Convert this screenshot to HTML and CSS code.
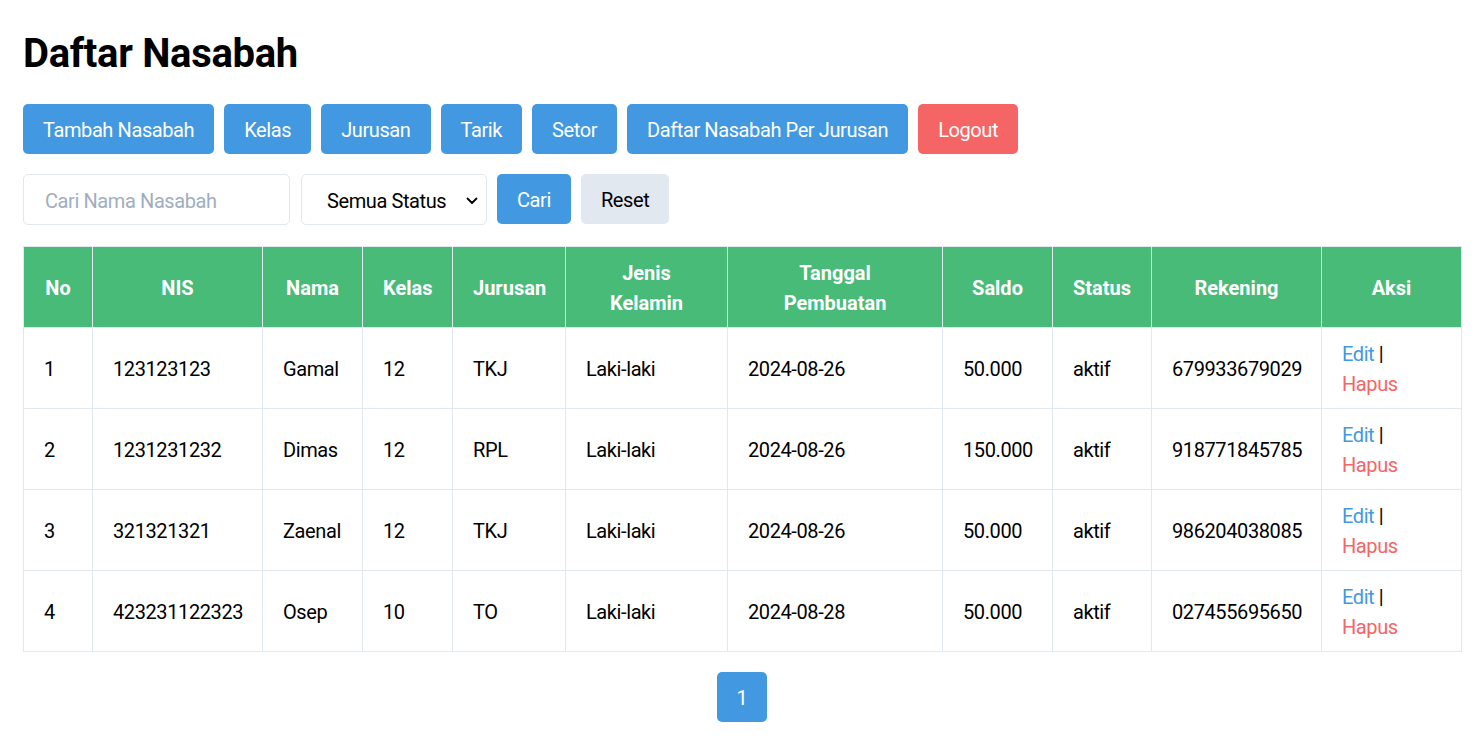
FILE: index.html
```html
<!DOCTYPE html>
<html lang="id">
<head>
<meta charset="utf-8">
<title>Daftar Nasabah</title>
<link rel="stylesheet" href="styles.css">
</head>
<body>
<div class="container">
  <h1 class="title">Daftar Nasabah</h1>
  <div class="actions">
    <a class="btn btn-blue" href="#">Tambah Nasabah</a>
    <a class="btn btn-blue" href="#">Kelas</a>
    <a class="btn btn-blue" href="#">Jurusan</a>
    <a class="btn btn-blue" href="#">Tarik</a>
    <a class="btn btn-blue" href="#">Setor</a>
    <a class="btn btn-blue" href="#">Daftar Nasabah Per Jurusan</a>
    <a class="btn btn-red" href="#">Logout</a>
  </div>
  <form class="search">
    <input class="search-input" type="text" placeholder="Cari Nama Nasabah">
    <div class="select-wrap">
      <select class="search-select">
        <option>Semua Status</option>
        <option>aktif</option>
        <option>nonaktif</option>
      </select>
      <svg class="chevron" width="12" height="8" viewBox="0 0 12 8"><path d="M1.5 1.5 L6 6 L10.5 1.5" fill="none" stroke="#000" stroke-width="1.8" stroke-linecap="round" stroke-linejoin="round"/></svg>
    </div>
    <button class="btn btn-blue" type="button">Cari</button>
    <button class="btn btn-gray" type="button">Reset</button>
  </form>
  <table class="data">
    <colgroup>
      <col class="c-no"><col class="c-nis"><col class="c-nama"><col class="c-kelas"><col class="c-jur"><col class="c-jk"><col class="c-tgl"><col class="c-saldo"><col class="c-status"><col class="c-rek"><col class="c-aksi">
    </colgroup>
    <thead>
      <tr>
        <th>No</th><th>NIS</th><th>Nama</th><th>Kelas</th><th>Jurusan</th><th>Jenis<br>Kelamin</th><th>Tanggal<br>Pembuatan</th><th>Saldo</th><th>Status</th><th>Rekening</th><th>Aksi</th>
      </tr>
    </thead>
    <tbody>
      <tr>
        <td>1</td><td>123123123</td><td>Gamal</td><td>12</td><td>TKJ</td><td>Laki-laki</td><td>2024-08-26</td><td>50.000</td><td>aktif</td><td>679933679029</td>
        <td><a class="link-edit" href="#">Edit</a> | <br><a class="link-del" href="#">Hapus</a></td>
      </tr>
      <tr>
        <td>2</td><td>1231231232</td><td>Dimas</td><td>12</td><td>RPL</td><td>Laki-laki</td><td>2024-08-26</td><td>150.000</td><td>aktif</td><td>918771845785</td>
        <td><a class="link-edit" href="#">Edit</a> | <br><a class="link-del" href="#">Hapus</a></td>
      </tr>
      <tr>
        <td>3</td><td>321321321</td><td>Zaenal</td><td>12</td><td>TKJ</td><td>Laki-laki</td><td>2024-08-26</td><td>50.000</td><td>aktif</td><td>986204038085</td>
        <td><a class="link-edit" href="#">Edit</a> | <br><a class="link-del" href="#">Hapus</a></td>
      </tr>
      <tr>
        <td>4</td><td>423231122323</td><td>Osep</td><td>10</td><td>TO</td><td>Laki-laki</td><td>2024-08-28</td><td>50.000</td><td>aktif</td><td>027455695650</td>
        <td><a class="link-edit" href="#">Edit</a> | <br><a class="link-del" href="#">Hapus</a></td>
      </tr>
    </tbody>
  </table>
  <div class="pagination">
    <a class="btn btn-blue page" href="#">1</a>
  </div>
</div>
</body>
</html>
```

FILE: styles.css
```css
* { box-sizing: border-box; }
html, body { margin: 0; padding: 0; background: #fff; }
body {
  font-family: Roboto, "Noto Sans", sans-serif;
  font-size: 20px;
  line-height: 30px;
  letter-spacing: -0.4px;
  color: #000;
}
.container {
  padding: 24px 20px 20px 23px;
}
.title {
  margin: 0 0 20px 0;
  font-size: 40px;
  line-height: 60px;
  font-weight: 700;
  letter-spacing: -0.3px;
}
.actions {
  display: flex;
  gap: 10px;
  margin-bottom: 20px;
}
.btn {
  display: inline-block;
  padding: 11px 20px 9px;
  border: 0;
  border-radius: 5px;
  font-family: inherit;
  font-size: 20px;
  line-height: 30px;
  letter-spacing: -0.4px;
  text-decoration: none;
  cursor: pointer;
}
.btn-blue { background: #4299e1; color: #fff; }
.btn-red { background: #f56565; color: #fff; }
.btn-gray { background: #e2e8f0; color: #000; }
.search {
  display: flex;
  align-items: flex-start;
  gap: 10px;
  margin: 0 0 21px 0;
}
.search-input {
  width: 267px;
  height: 51px;
  padding: 2px 21px 0;
  border: 1px solid #e2e8f0;
  border-radius: 5px;
  font-family: inherit;
  font-size: 20px;
  letter-spacing: -0.4px;
  color: #000;
  outline: none;
}
.search-input::placeholder { color: #a0aec0; }
.select-wrap {
  position: relative;
  margin-left: 1px;
}
.search-select {
  appearance: none;
  -webkit-appearance: none;
  width: 186px;
  height: 51px;
  padding: 2px 30px 0 25px;
  border: 1px solid #e2e8f0;
  border-radius: 5px;
  background: #fff;
  font-family: inherit;
  font-size: 20px;
  letter-spacing: -0.4px;
  color: #000;
}
.chevron {
  position: absolute;
  right: 9px;
  top: 23px;
  pointer-events: none;
}
.data {
  width: 1438px;
  border-collapse: collapse;
  table-layout: fixed;
}
.c-no { width: 69px; }
.c-nis { width: 170px; }
.c-nama { width: 100px; }
.c-kelas { width: 90px; }
.c-jur { width: 113px; }
.c-jk { width: 162px; }
.c-tgl { width: 215px; }
.c-saldo { width: 110px; }
.c-status { width: 99px; }
.c-rek { width: 170px; }
.c-aksi { width: 140px; }
.data th, .data td {
  border: 1px solid #e2e8f0;
  padding: 11px 20px 9px;
  vertical-align: middle;
}
.data th {
  background: #48bb78;
  color: #fff;
  font-weight: 700;
  letter-spacing: 0;
  text-align: center;
}
.data td {
  text-align: left;
  height: 81px;
}
.link-edit { color: #4299e1; text-decoration: none; }
.link-del { color: #f56565; text-decoration: none; }
.pagination {
  display: flex;
  justify-content: center;
  margin-top: 20px;
}
.page {
  width: 50px;
  height: 50px;
  padding: 11px 0 9px;
  text-align: center;
}
```
